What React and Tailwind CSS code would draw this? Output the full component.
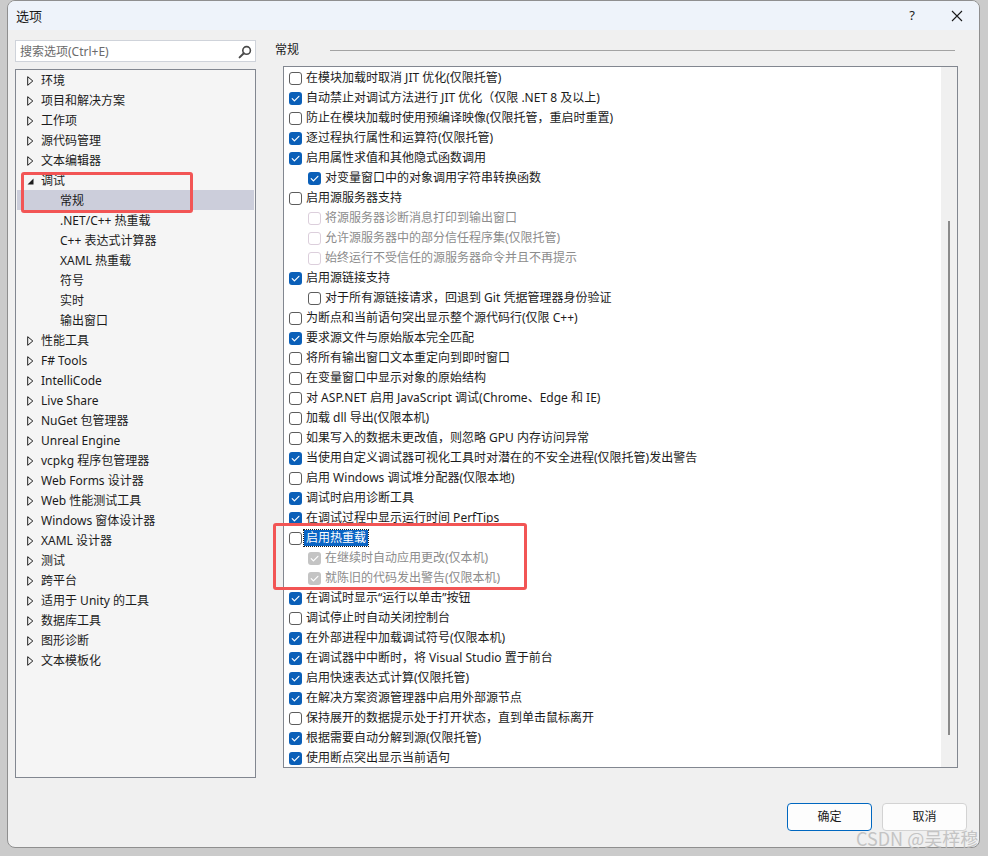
import React from "react";

const tree = [
  { t: "环境" }, { t: "项目和解决方案" }, { t: "工作项" }, { t: "源代码管理" }, { t: "文本编辑器" },
  { t: "调试", open: true },
  { t: "常规", child: true, sel: true }, { t: ".NET/C++ 热重载", child: true }, { t: "C++ 表达式计算器", child: true },
  { t: "XAML 热重载", child: true }, { t: "符号", child: true }, { t: "实时", child: true }, { t: "输出窗口", child: true },
  { t: "性能工具" }, { t: "F# Tools" }, { t: "IntelliCode" }, { t: "Live Share" }, { t: "NuGet 包管理器" },
  { t: "Unreal Engine" }, { t: "vcpkg 程序包管理器" }, { t: "Web Forms 设计器" }, { t: "Web 性能测试工具" },
  { t: "Windows 窗体设计器" }, { t: "XAML 设计器" }, { t: "测试" }, { t: "跨平台" }, { t: "适用于 Unity 的工具" },
  { t: "数据库工具" }, { t: "图形诊断" }, { t: "文本模板化" },
];

const opts = [
  ["在模块加载时取消 JIT 优化(仅限托管)", 0],
  ["自动禁止对调试方法进行 JIT 优化（仅限 .NET 8 及以上)", 1],
  ["防止在模块加载时使用预编译映像(仅限托管，重启时重置)", 0],
  ["逐过程执行属性和运算符(仅限托管)", 1],
  ["启用属性求值和其他隐式函数调用", 1],
  ["对变量窗口中的对象调用字符串转换函数", 1, "i"],
  ["启用源服务器支持", 0],
  ["将源服务器诊断消息打印到输出窗口", 0, "id"],
  ["允许源服务器中的部分信任程序集(仅限托管)", 0, "id"],
  ["始终运行不受信任的源服务器命令并且不再提示", 0, "id"],
  ["启用源链接支持", 1],
  ["对于所有源链接请求，回退到 Git 凭据管理器身份验证", 0, "i"],
  ["为断点和当前语句突出显示整个源代码行(仅限 C++)", 0],
  ["要求源文件与原始版本完全匹配", 1],
  ["将所有输出窗口文本重定向到即时窗口", 0],
  ["在变量窗口中显示对象的原始结构", 0],
  ["对 ASP.NET 启用 JavaScript 调试(Chrome、Edge 和 IE)", 0],
  ["加载 dll 导出(仅限本机)", 0],
  ["如果写入的数据未更改值，则忽略 GPU 内存访问异常", 0],
  ["当使用自定义调试器可视化工具时对潜在的不安全进程(仅限托管)发出警告", 1],
  ["启用 Windows 调试堆分配器(仅限本地)", 0],
  ["调试时启用诊断工具", 1],
  ["在调试过程中显示运行时间 PerfTips", 1],
  ["启用热重载", 0, "h"],
  ["在继续时自动应用更改(仅本机)", 1, "id"],
  ["就陈旧的代码发出警告(仅限本机)", 1, "id"],
  ["在调试时显示“运行以单击”按钮", 1],
  ["调试停止时自动关闭控制台", 0],
  ["在外部进程中加载调试符号(仅限本机)", 1],
  ["在调试器中中断时，将 Visual Studio 置于前台", 1],
  ["启用快速表达式计算(仅限托管)", 1],
  ["在解决方案资源管理器中启用外部源节点", 1],
  ["保持展开的数据提示处于打开状态，直到单击鼠标离开", 0],
  ["根据需要自动分解到源(仅限托管)", 1],
  ["使用断点突出显示当前语句", 1],
];

function Check() {
  return (
    <svg width="13" height="13" viewBox="0 0 13 13" className="block">
      <path d="M3.2 6.7 L5.4 8.9 L9.9 4.3" fill="none" stroke="#ffffff" strokeWidth="1.2" strokeLinecap="round" strokeLinejoin="round" />
    </svg>
  );
}

function Box({ checked, disabled }) {
  if (checked && disabled)
    return <div className="w-[13px] h-[13px] rounded-[3px] bg-[#c4c4c4] shrink-0"><Check /></div>;
  if (checked)
    return <div className="w-[13px] h-[13px] rounded-[3px] bg-[#0a5fb8] shrink-0"><Check /></div>;
  if (disabled)
    return <div className="w-[13px] h-[13px] rounded-[3px] border border-[#dccfdc] bg-white shrink-0" />;
  return <div className="w-[13px] h-[13px] rounded-[3px] border border-[#5d5d5d] bg-white shrink-0" />;
}

export default function App() {
  return (
    <div className="relative w-[988px] h-[856px] bg-[#cbcbcb] overflow-hidden font-['Noto_Sans','Noto_Sans_CJK_SC',sans-serif] text-[12px] text-[#1b1b1b]">
      <div className="ml-[7px] w-[973px] h-[848px] bg-[#f0f0f0] border border-[#8f8f8f] rounded-[8px] flex flex-col overflow-hidden">
        {/* title bar */}
        <div className="h-[29px] bg-[#eef3fa] flex items-center shrink-0">
          <span className="pl-[8px] text-[13px] text-[#1a1a1a] font-['Noto_Sans_CJK_SC',sans-serif]">选项</span>
          <div className="flex-1" />
          <span className="text-[13px] text-[#1a1a1a] mr-[36px]">?</span>
          <svg width="12" height="12" viewBox="0 0 12 12" className="mr-[16px]">
            <path d="M1 1 L11 11 M11 1 L1 11" stroke="#1a1a1a" strokeWidth="1.1" />
          </svg>
        </div>
        {/* body */}
        <div className="flex pt-[10px]">
          <div className="ml-[7px] w-[241px] flex flex-col">
            <div className="h-[22px] bg-white border border-[#cfd3da] flex items-center pl-[4px] pr-[3px] pt-[1px]">
              <span className="text-[#6b6b6b] flex-1">搜索选项(Ctrl+E)</span>
              <svg width="14" height="14" viewBox="0 0 14 14">
                <circle cx="8.6" cy="5.4" r="3.8" fill="none" stroke="#4a4a4a" strokeWidth="1.6" />
                <path d="M5.8 8.2 L1.6 12.4" stroke="#4a4a4a" strokeWidth="2" strokeLinecap="round" />
              </svg>
            </div>
            <div className="mt-[7px] h-[709px] bg-[#f5f5f5] border border-[#828790]">
              {tree.map((it, i) => (
                <div
                  key={i}
                  className={`h-[20px] pt-[2px] flex items-center mx-[1px] ${it.sel ? "bg-[#cccedb]" : ""}`}
                >
                  {it.child ? (
                    <span className="pl-[43px] whitespace-nowrap">{it.t}</span>
                  ) : (
                    <>
                      <span className="pl-[10px] w-[24px] flex items-center shrink-0">
                        {it.open ? (
                          <svg width="7" height="7" viewBox="0 0 7 7">
                            <polygon points="6.5,0.5 6.5,6.5 0.5,6.5" fill="#1e1e1e" />
                          </svg>
                        ) : (
                          <svg width="7" height="10" viewBox="0 0 7 10">
                            <polygon points="0.7,0.7 5.8,5 0.7,9.3" fill="none" stroke="#1e1e1e" strokeWidth="1" />
                          </svg>
                        )}
                      </span>
                      <span className="whitespace-nowrap">{it.t}</span>
                    </>
                  )}
                </div>
              ))}
            </div>
          </div>
          <div className="ml-[19px] w-[682px] flex flex-col">
            <div className="h-[18px] pt-[2px] flex items-center">
              <span>常规</span>
              <div className="ml-[31px] w-[625px] h-px bg-[#a3a3a3]" />
            </div>
            <div className="mt-[8px] ml-[8px] w-[675px] h-[702px] bg-white border border-[#828790] flex">
              <div className="flex-1 flex flex-col">
                {opts.map(([label, checked, kind], i) => {
                  const ind = kind && kind.includes("i");
                  const dis = kind && kind.includes("d");
                  const hl = kind === "h";
                  return (
                    <div key={i} className={`h-[20px] pt-[2px] flex items-center ${ind ? "pl-[24px]" : "pl-[5px]"}`}>
                      <Box checked={!!checked} disabled={!!dis} />
                      <span
                        className={`ml-[2px] px-[2px] leading-[16px] whitespace-nowrap ${
                          hl
                            ? "bg-[#0a64c4] text-white outline outline-1 outline-dotted outline-[#1a1a1a]"
                            : dis
                            ? "text-[#8c8c8c]"
                            : ""
                        }`}
                      >
                        {label}
                      </span>
                    </div>
                  );
                })}
              </div>
              <div className="w-[16px] bg-[#f0f0f0] shrink-0">
                <div className="mt-[154px] ml-[7px] w-[2px] h-[514px] bg-[#8b8b8b]" />
              </div>
            </div>
          </div>
        </div>
        {/* buttons */}
        <div className="flex justify-end gap-[10px] mt-[25px] pr-[12px]">
          <button className="w-[85px] h-[28px] bg-[#fdfdfd] border border-[#0067c0] rounded-[4px] text-[12px] text-[#1a1a1a]">确定</button>
          <button className="w-[85px] h-[28px] bg-[#fdfdfd] border border-[#d3d3d3] rounded-[4px] text-[12px] text-[#1a1a1a]">取消</button>
        </div>
      </div>

      {/* annotations */}
      <div className="absolute left-[21px] top-[172px] w-[172px] h-[41px] border-[3px] border-[#f25555] rounded-[3px]" />
      <div className="absolute left-[273px] top-[523px] w-[254px] h-[67px] border-[3px] border-[#f25555] rounded-[3px]" />

      {/* watermark */}
      <div className="absolute left-[856px] top-[827px] text-[18px] leading-[23px] text-[#c4c4c4] font-['Noto_Sans_CJK_SC',sans-serif] whitespace-nowrap">
        CSDN @吴梓穆
      </div>
    </div>
  );
}
